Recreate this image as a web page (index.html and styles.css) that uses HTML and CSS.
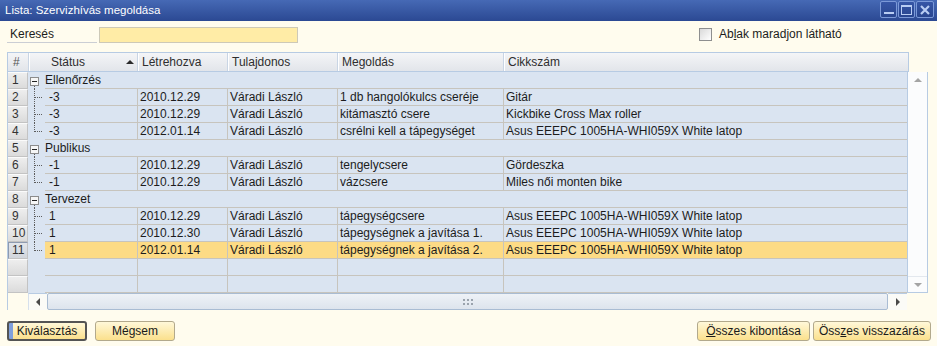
FILE: index.html
```html
<!DOCTYPE html>
<html lang="hu">
<head>
    <meta charset="UTF-8">
    <title>Lista: Szervizhívás megoldása</title>
    <link rel="stylesheet" href="styles.css">
</head>
<body>

<div class="window">
    <div class="titlebar">
        <span class="title">Lista: Szervizhívás megoldása</span>
        <div class="win-buttons">
            <span class="win-btn">
                <svg width="10" height="10" viewBox="0 0 10 10"><rect x="0" y="7" width="10" height="2" fill="#b9cdf3"/></svg>
            </span>
            <span class="win-btn">
                <svg width="11" height="10" viewBox="0 0 11 10"><rect x="0.5" y="0.5" width="10" height="9" fill="none" stroke="#b9cdf3"/><rect x="0" y="0" width="11" height="2" fill="#b9cdf3"/></svg>
            </span>
            <span class="win-btn close">
                <svg width="10" height="10" viewBox="0 0 10 10"><path d="M1 1L9 9M9 1L1 9" stroke="#b9cdf3" stroke-width="2.2"/></svg>
            </span>
        </div>
    </div>

    <!-- Search -->
    <div class="search-row">
        <div class="search-label">Keresés</div>
        <div class="search-input"></div>
        <div class="keep-visible">
            <span class="checkbox"></span>
            <span>Ab<u>l</u>ak maradjon látható</span>
        </div>
    </div>

    <!-- Grid -->
    <div class="grid">
        <div class="grid-head">
            <div class="hcell hnum">#</div>
            <div class="hcell hstatus">Státus
                <svg class="sort" width="8" height="4" viewBox="0 0 8 4"><path d="M0 4L4 0L8 4Z" fill="#2a2a2a"/></svg>
            </div>
            <div class="hcell">Létrehozva</div>
            <div class="hcell">Tulajdonos</div>
            <div class="hcell">Megoldás</div>
            <div class="hcell">Cikkszám</div>
        </div>

        <div class="grid-body">
            <div class="rows">
                <div class="row group">
                    <div class="num">1</div>
                    <div class="tree open"><svg width="9" height="9" viewBox="0 0 9 9"><rect x="0.5" y="0.5" width="8" height="8" fill="#f6f6f6" stroke="#8c8c8c"/><path d="M2 4.5H7" stroke="#222"/></svg></div>
                    <div class="group-title">Ellenőrzés</div>
                </div>
                <div class="row">
                    <div class="num">2</div>
                    <div class="tree child"></div>
                    <div class="cell first">-3</div>
                    <div class="cell">2010.12.29</div>
                    <div class="cell">Váradi László</div>
                    <div class="cell">1 db hangolókulcs cseréje</div>
                    <div class="cell">Gitár</div>
                </div>
                <div class="row">
                    <div class="num">3</div>
                    <div class="tree child"></div>
                    <div class="cell first">-3</div>
                    <div class="cell">2010.12.29</div>
                    <div class="cell">Váradi László</div>
                    <div class="cell">kitámasztó csere</div>
                    <div class="cell">Kickbike Cross Max roller</div>
                </div>
                <div class="row">
                    <div class="num">4</div>
                    <div class="tree child last"></div>
                    <div class="cell first">-3</div>
                    <div class="cell">2012.01.14</div>
                    <div class="cell">Váradi László</div>
                    <div class="cell">csrélni kell a tápegységet</div>
                    <div class="cell">Asus EEEPC 1005HA-WHI059X White latop</div>
                </div>
                <div class="row group">
                    <div class="num">5</div>
                    <div class="tree open"><svg width="9" height="9" viewBox="0 0 9 9"><rect x="0.5" y="0.5" width="8" height="8" fill="#f6f6f6" stroke="#8c8c8c"/><path d="M2 4.5H7" stroke="#222"/></svg></div>
                    <div class="group-title">Publikus</div>
                </div>
                <div class="row">
                    <div class="num">6</div>
                    <div class="tree child"></div>
                    <div class="cell first">-1</div>
                    <div class="cell">2010.12.29</div>
                    <div class="cell">Váradi László</div>
                    <div class="cell">tengelycsere</div>
                    <div class="cell">Gördeszka</div>
                </div>
                <div class="row">
                    <div class="num">7</div>
                    <div class="tree child last"></div>
                    <div class="cell first">-1</div>
                    <div class="cell">2010.12.29</div>
                    <div class="cell">Váradi László</div>
                    <div class="cell">vázcsere</div>
                    <div class="cell">Miles női monten bike</div>
                </div>
                <div class="row group">
                    <div class="num">8</div>
                    <div class="tree open"><svg width="9" height="9" viewBox="0 0 9 9"><rect x="0.5" y="0.5" width="8" height="8" fill="#f6f6f6" stroke="#8c8c8c"/><path d="M2 4.5H7" stroke="#222"/></svg></div>
                    <div class="group-title">Tervezet</div>
                </div>
                <div class="row">
                    <div class="num">9</div>
                    <div class="tree child"></div>
                    <div class="cell first">1</div>
                    <div class="cell">2010.12.29</div>
                    <div class="cell">Váradi László</div>
                    <div class="cell">tápegységcsere</div>
                    <div class="cell">Asus EEEPC 1005HA-WHI059X White latop</div>
                </div>
                <div class="row">
                    <div class="num">10</div>
                    <div class="tree child"></div>
                    <div class="cell first">1</div>
                    <div class="cell">2010.12.30</div>
                    <div class="cell">Váradi László</div>
                    <div class="cell">tápegységnek a javítása 1.</div>
                    <div class="cell">Asus EEEPC 1005HA-WHI059X White latop</div>
                </div>
                <div class="row selected">
                    <div class="num">11</div>
                    <div class="tree child last"></div>
                    <div class="cell first">1</div>
                    <div class="cell">2012.01.14</div>
                    <div class="cell">Váradi László</div>
                    <div class="cell">tápegységnek a javítása 2.</div>
                    <div class="cell">Asus EEEPC 1005HA-WHI059X White latop</div>
                </div>
                <div class="row">
                    <div class="num"></div>
                    <div class="tree"></div>
                    <div class="cell first"></div>
                    <div class="cell"></div>
                    <div class="cell"></div>
                    <div class="cell"></div>
                    <div class="cell"></div>
                </div>
                <div class="row">
                    <div class="num"></div>
                    <div class="tree"></div>
                    <div class="cell first"></div>
                    <div class="cell"></div>
                    <div class="cell"></div>
                    <div class="cell"></div>
                    <div class="cell"></div>
                </div>
            </div>

            <div class="vscroll">
                <div class="vs-btn"><svg width="8" height="4" viewBox="0 0 8 4"><path d="M0 4L4 0L8 4Z" fill="#a4a4a4"/></svg></div>
                <div class="vs-btn down"><svg width="8" height="4" viewBox="0 0 8 4"><path d="M0 0L4 4L8 0Z" fill="#a4a4a4"/></svg></div>
            </div>
        </div>

        <div class="hscroll">
            <div class="hs-btn"><svg width="4" height="8" viewBox="0 0 4 8"><path d="M4 0L0 4L4 8Z" fill="#4a4a4a"/></svg></div>
            <div class="hs-track">
                <svg width="10" height="6" viewBox="0 0 10 6"><g fill="#9aa3ad"><rect x="0" y="0" width="2" height="2"/><rect x="4" y="0" width="2" height="2"/><rect x="8" y="0" width="2" height="2"/><rect x="0" y="4" width="2" height="2"/><rect x="4" y="4" width="2" height="2"/><rect x="8" y="4" width="2" height="2"/></g></svg>
            </div>
            <div class="hs-btn"><svg width="4" height="8" viewBox="0 0 4 8"><path d="M0 0L4 4L0 8Z" fill="#4a4a4a"/></svg></div>
        </div>
    </div>

    <!-- Buttons -->
    <div class="actions">
        <button class="btn default">Kiválasztás</button>
        <button class="btn">Mégsem</button>
        <button class="btn expand"><u>Ö</u>sszes kibontása</button>
        <button class="btn collapse">Öss<u>z</u>es visszazárás</button>
    </div>
</div>

</body>
</html>
```

FILE: styles.css
```css
* {
    box-sizing: border-box;
}

body {
    margin: 0;
    font-family: "Liberation Sans", Arial, sans-serif;
    font-size: 12px;
    color: #1c1c1c;
    background: #fffcee;
}

.window {
    width: 937px;
    height: 346px;
    overflow: hidden;
    background: #fffcee;
}

/* Title bar */
.titlebar {
    height: 21px;
    display: flex;
    justify-content: space-between;
    background: linear-gradient(#4669b5, #2b4993);
    color: white;
    padding-left: 5px;
}

.title {
    font-size: 11.5px;
    line-height: 21px;
}

.win-buttons {
    display: flex;
    gap: 1px;
    padding: 1px 3px 0 0;
}

.win-btn {
    width: 17px;
    height: 17px;
    border: 1px solid #7b99d8;
    border-radius: 2px;
    background: linear-gradient(#3656a6, #294690);
    display: flex;
    align-items: center;
    justify-content: center;
}

.win-btn.close {
    width: 18px;
}

/* Search row */
.search-row {
    height: 31px;
    display: flex;
    align-items: flex-start;
    padding: 6px 0 0 7px;
}

.search-label {
    width: 90px;
    height: 16px;
    padding-left: 3px;
    line-height: 15px;
    border-bottom: 1px solid #cbced4;
}

.search-input {
    width: 199px;
    height: 16px;
    margin-left: 2px;
    background: #ffeca6;
    border: 1px solid #cdc9b8;
}

.keep-visible {
    margin-left: 401px;
    margin-top: 1px;
    display: flex;
    align-items: center;
    gap: 7px;
    line-height: 13px;
}

.checkbox {
    width: 13px;
    height: 13px;
    border: 1px solid #8e8f8f;
    background: linear-gradient(135deg, #d9d9d9, #ffffff);
}

/* Grid */
.grid {
    margin-left: 7px;
    width: 921px;
}

.grid-head {
    display: grid;
    grid-template-columns: 20px 109px 90px 110px 166px 1fr;
    width: 902px;
    height: 20px;
    border: 1px solid #b7cbe3;
    background: linear-gradient(#f4f5f7, #e2e5ea);
    color: #2e2e2e;
}

.hcell {
    display: flex;
    align-items: center;
    padding-left: 4px;
    border-left: 1px solid #c9d5e4;
    box-shadow: inset 1px 0 0 #ffffff;
}

.hnum {
    border-left: none;
    box-shadow: none;
    color: #555;
    padding-left: 5px;
}

.hstatus {
    padding-left: 22px;
}

.sort {
    margin-left: auto;
    margin-right: 3px;
}

.grid-body {
    display: flex;
    height: 221px;
}

.rows {
    width: 900px;
    border-left: 1px solid #b7cbe3;
    background: #dae4f1;
}

.row {
    display: grid;
    grid-template-columns: 20px 17px 92px 90px 110px 166px 1fr;
    height: 17px;
}

.num {
    padding-left: 4px;
    line-height: 15px;
    color: #333;
    background: linear-gradient(#eeeeee, #dbdbdb);
    border-top: 1px solid #fbfbfb;
    border-right: 1px solid #c3c3c3;
    border-bottom: 1px solid #c3c3c3;
}

.cell {
    padding-left: 2px;
    line-height: 16px;
    white-space: nowrap;
    overflow: hidden;
    border-left: 1px solid #c7c4bd;
    border-bottom: 1px solid #c7c4bd;
}

.cell.first {
    border-left: none;
    padding-left: 4px;
}

.group-title {
    grid-column: 3 / -1;
    line-height: 16px;
    border-bottom: 1px solid #c7c4bd;
}

/* Tree connectors */
.tree.open {
    padding: 5px 0 0 2px;
    background: repeating-linear-gradient(to bottom, #5c5c5c 0 1px, transparent 1px 2px) 6px 14px / 1px 3px no-repeat;
}

.tree.open svg {
    display: block;
}

.tree.child {
    background:
        repeating-linear-gradient(to right, #5c5c5c 0 1px, transparent 1px 2px) 7px 8px / 7px 1px no-repeat,
        repeating-linear-gradient(to bottom, #5c5c5c 0 1px, transparent 1px 2px) 6px 0 / 1px 100% no-repeat;
}

.tree.child.last {
    background:
        repeating-linear-gradient(to right, #5c5c5c 0 1px, transparent 1px 2px) 7px 8px / 7px 1px no-repeat,
        repeating-linear-gradient(to bottom, #5c5c5c 0 1px, transparent 1px 2px) 6px 0 / 1px 9px no-repeat;
}

.row.selected .cell {
    background: #fddb85;
}

.row.selected .num {
    background: linear-gradient(#e2e5ea, #d2d6dc);
    border-top: 1px solid #8e9bb0;
    border-left: 1px solid #8e9bb0;
    padding-left: 3px;
}

/* Scrollbars */
.vscroll {
    width: 21px;
    border-left: 1px solid #b7cbe3;
    border-right: 1px solid #b7cbe3;
    border-bottom: 1px solid #b7cbe3;
    background: #fbfcfd;
    display: flex;
    flex-direction: column;
    justify-content: space-between;
}

.vs-btn {
    height: 16px;
    display: flex;
    align-items: center;
    justify-content: center;
}

.vs-btn.down {
    border-top: 1px solid #e3e8ee;
}

.hscroll {
    width: 900px;
    height: 17px;
    display: flex;
    border-left: 1px solid #b7cbe3;
    padding-left: 20px;
}

.hs-btn {
    width: 19px;
    display: flex;
    align-items: center;
    justify-content: center;
    background: #fbfbf7;
    border-top: 1px solid #b7cbe3;
}

.hs-btn:first-child {
    border-left: 1px solid #d6e0ec;
}

.hs-track {
    flex: 1;
    display: flex;
    align-items: center;
    justify-content: center;
    border: 1px solid #a9bcd3;
    border-radius: 2px;
    background: linear-gradient(#eef2f7, #dde4ed);
}

/* Bottom buttons */
.actions {
    display: flex;
    padding: 11px 0 0 7px;
}

.btn {
    height: 20px;
    padding: 0;
    font-family: inherit;
    font-size: 12px;
    color: #1a1a1a;
    border: 1px solid #b2a98c;
    border-radius: 3px;
    background: linear-gradient(#fff8d9, #fbe08c);
    white-space: nowrap;
}

.btn.default {
    width: 80px;
    border: 2px solid #545454;
    background:
        linear-gradient(to right, #7f9fdc 0 4px, transparent 4px),
        linear-gradient(#fff8d9, #fbe08c);
}

.btn + .btn {
    margin-left: 8px;
    width: 80px;
}

.btn.expand {
    margin-left: 522px;
    width: 113px;
}

.btn.collapse {
    margin-left: 3px;
    width: 118px;
    text-align: left;
    padding-left: 5px;
    overflow: hidden;
}
```
